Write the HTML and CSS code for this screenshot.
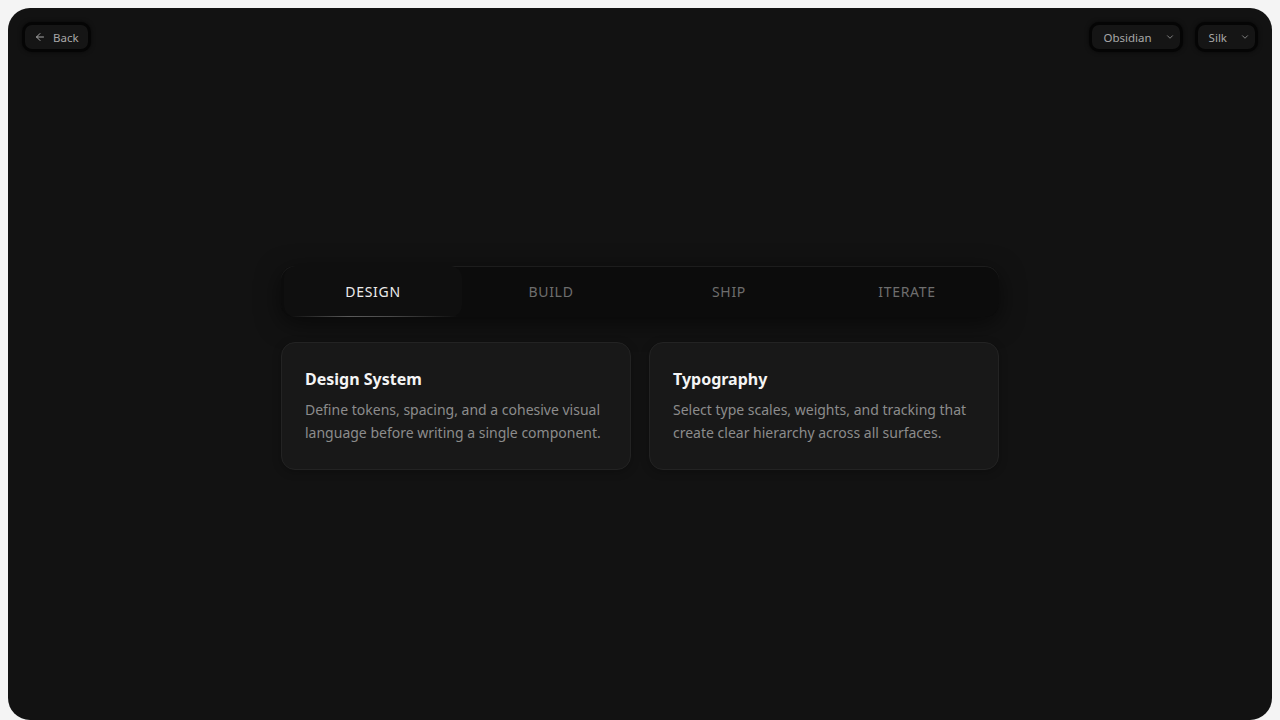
FILE: index.html
```html
<!DOCTYPE html>
<html lang="en">

<head>
    <meta charset="UTF-8">
    <meta name="viewport" content="width=device-width, initial-scale=1.0">
    <title>Process</title>
    <link rel="stylesheet" href="styles.css">
</head>

<body>
    <div id="painel">
        <!--BARRA DO TOPO-->
        <header class="topo">
            <button class="pill">
                <svg width="12" height="12" viewBox="0 0 24 24" fill="none" stroke="currentColor" stroke-width="2"
                    stroke-linecap="round" stroke-linejoin="round">
                    <path d="M19 12H5" />
                    <path d="M12 19l-7-7 7-7" />
                </svg>
                Back
            </button>
            <div class="selects">
                <button class="pill">
                    Obsidian
                    <svg width="10" height="10" viewBox="0 0 24 24" fill="none" stroke="currentColor"
                        stroke-width="2.2" stroke-linecap="round" stroke-linejoin="round">
                        <path d="M6 9l6 6 6-6" />
                    </svg>
                </button>
                <button class="pill">
                    Silk
                    <svg width="10" height="10" viewBox="0 0 24 24" fill="none" stroke="currentColor"
                        stroke-width="2.2" stroke-linecap="round" stroke-linejoin="round">
                        <path d="M6 9l6 6 6-6" />
                    </svg>
                </button>
            </div>
        </header>

        <!--CONTEÚDO CENTRAL-->
        <main class="centro">
            <nav class="abas">
                <div class="aba ativa">DESIGN</div>
                <div class="aba">BUILD</div>
                <div class="aba">SHIP</div>
                <div class="aba">ITERATE</div>
            </nav>

            <div class="cards">
                <div class="card">
                    <h3>Design System</h3>
                    <p>Define tokens, spacing, and a cohesive visual language before writing a single component.</p>
                </div>
                <div class="card">
                    <h3>Typography</h3>
                    <p>Select type scales, weights, and tracking that create clear hierarchy across all surfaces.</p>
                </div>
            </div>
        </main>
    </div>
</body>

</html>
```

FILE: styles.css
```css
* {
    margin: 0;
    padding: 0;
    box-sizing: border-box;
}

html,
body {
    height: 100%;
    overflow: hidden;
}

body {
    font-family: "Noto Sans", sans-serif;
    background: #f4f4f4;
    padding: 8px 8px 0 8px;
}

#painel {
    height: 712px;
    background: #121212;
    border-radius: 22px;
    display: flex;
    flex-direction: column;
    padding: 14px 14px;
}

/* TOPO */
.topo {
    display: flex;
    justify-content: space-between;
    align-items: center;
}

.selects {
    display: flex;
    gap: 12px;
}

.pill {
    display: flex;
    align-items: center;
    gap: 7px;
    height: 30px;
    padding: 0 9px 0 9px;
    background: #151515;
    border: 3px solid #050505;
    border-radius: 10px;
    color: #a8a8a8;
    font-family: "Noto Sans", sans-serif;
    font-size: 11.5px;
    box-shadow: 0 0 4px rgba(0, 0, 0, 0.6);
}

.selects .pill {
    gap: 13px;
    padding: 0 5px 0 11px;
}

.selects .pill svg {
    color: #8a8a8a;
}

/* CENTRO */
.centro {
    width: 718px;
    margin: 0 auto;
    padding-top: 214px;
}

.abas {
    display: grid;
    grid-template-columns: repeat(4, 1fr);
    height: 51px;
    padding: 0 3px;
    background: #0c0c0c;
    border-radius: 14px;
    box-shadow: inset 0 1px 0 #1d1d1d, 0 6px 24px rgba(0, 0, 0, 0.55);
}

.aba {
    display: flex;
    align-items: center;
    justify-content: center;
    font-size: 14px;
    letter-spacing: 0.7px;
    color: #6e6e6e;
}

.aba.ativa {
    position: relative;
    color: #ececec;
    background: #0f0f0f;
    border-radius: 12px;
}

/* LINHA DA ABA ATIVA */
.aba.ativa::after {
    content: "";
    position: absolute;
    left: 6px;
    right: 4px;
    bottom: 0;
    height: 1px;
    background: linear-gradient(90deg, transparent, #5a5a5a 35%, #4a4a4a 60%, transparent);
}

.cards {
    display: grid;
    grid-template-columns: 1fr 1fr;
    gap: 18px;
    margin-top: 25px;
}

.card {
    background: #181818;
    border: 1px solid #232323;
    border-radius: 14px;
    padding: 25px 23px 25px 23px;
    box-shadow: 0 2px 8px rgba(0, 0, 0, 0.25);
}

.card h3 {
    font-size: 16px;
    font-weight: 700;
    color: #f4f4f4;
    margin-bottom: 8px;
}

.card p {
    font-size: 14px;
    line-height: 23px;
    color: #8c8c8c;
}
```
